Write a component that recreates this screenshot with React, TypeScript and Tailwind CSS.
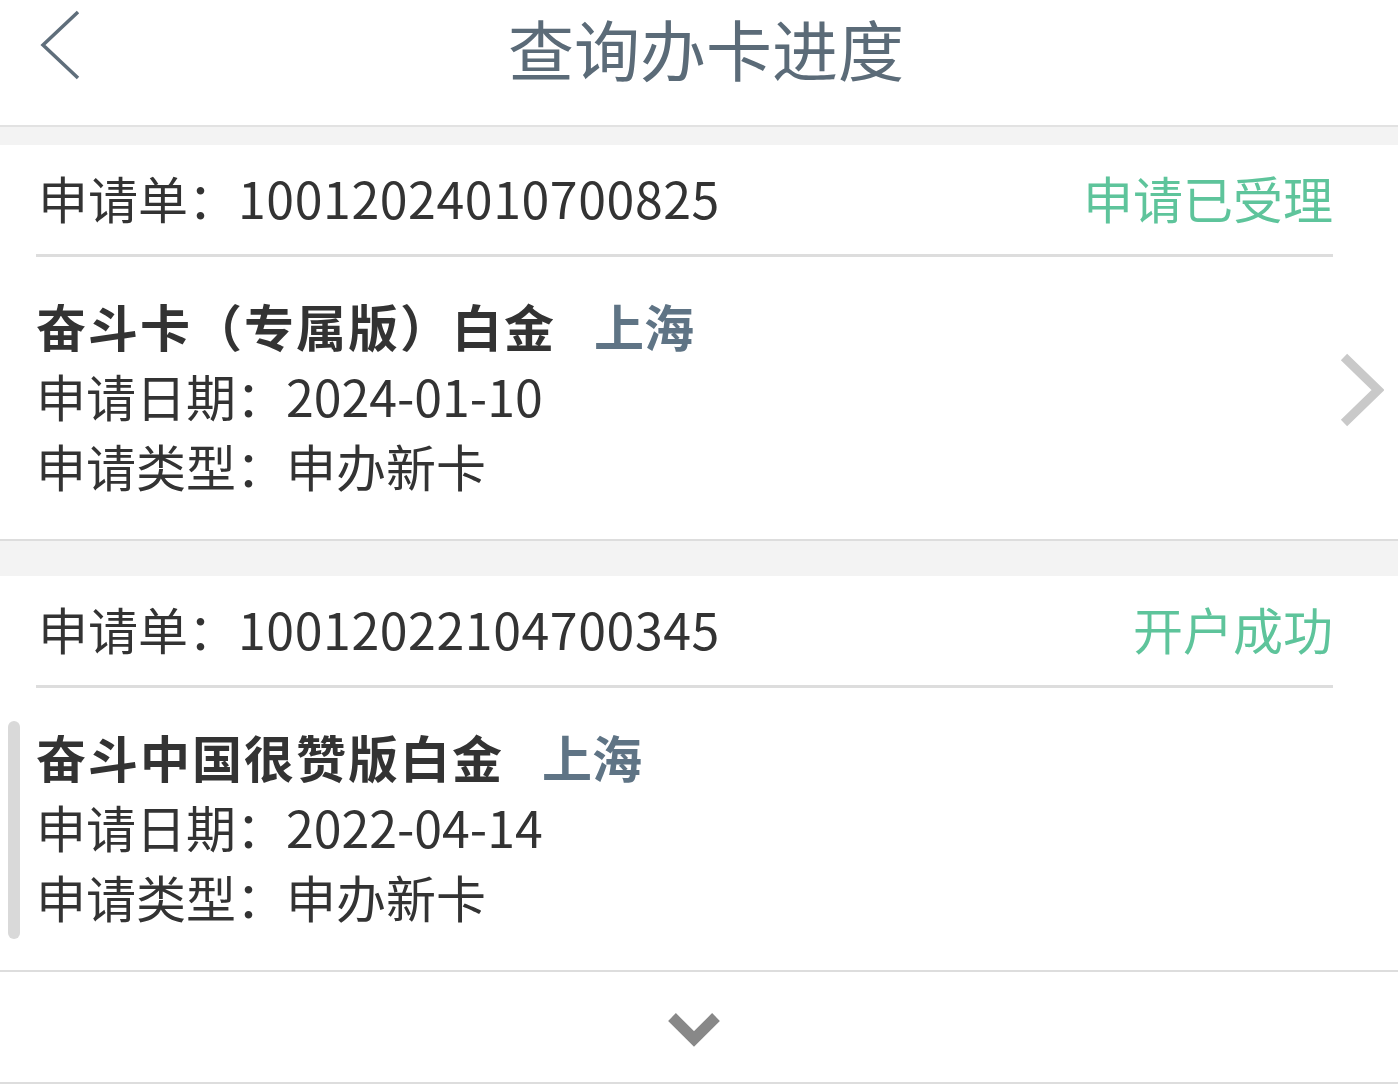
import React from 'react'

const FONT = { fontFamily: '"Noto Sans CJK SC", "Noto Sans", sans-serif' }

type Order = {
  no: string
  status: string
  card: string
  city: string
  date: string
  kind: string
  arrow?: boolean
  scroll?: boolean
}

const orders: Order[] = [
  {
    no: '10012024010700825',
    status: '申请已受理',
    card: '奋斗卡（专属版）白金',
    city: '上海',
    date: '2024-01-10',
    kind: '申办新卡',
    arrow: true,
  },
  {
    no: '10012022104700345',
    status: '开户成功',
    card: '奋斗中国很赞版白金',
    city: '上海',
    date: '2022-04-14',
    kind: '申办新卡',
    scroll: true,
  },
]

const OrderCard = ({ o }: { o: Order }) => {
  return (
    <section className="relative bg-white pl-[36px] pr-[65px]">
      {/** header row */}
      <div className="flex h-[109px] items-center justify-between pb-[4px] pl-[2px]">
        <span className="text-[50px] text-[#333333]">
          申请单：<span className="tracking-[0.6px]">{o.no}</span>
        </span>
        <span className="text-[50px] text-[#5ec49b]">{o.status}</span>
      </div>
      <div className="h-[3px] bg-[#dddddd]"></div>

      {/** body */}
      <div className="pb-[39px] pt-[33px] text-[50px] leading-[70px] text-[#333333]">
        <div className="flex items-center">
          <span className="font-bold tracking-[2px]">{o.card}</span>
          <span className="ml-[38px] font-bold text-[#5f7485]">{o.city}</span>
        </div>
        <div>申请日期：{o.date}</div>
        <div>申请类型：{o.kind}</div>
      </div>

      {o.arrow && (
        <svg
          className="absolute right-[14px] top-[208px]"
          width="44"
          height="74"
          viewBox="0 0 44 74"
          fill="none"
        >
          <path d="M4 4 L38 37 L4 70" stroke="#c9c9c9" strokeWidth="9" />
        </svg>
      )}
      {o.scroll && (
        <div className="absolute left-[8px] top-[145px] h-[218px] w-[12px] rounded-full bg-[#d9d9d9]"></div>
      )}
    </section>
  )
}

const App = () => {
  return (
    <div className="min-h-screen bg-white" style={FONT}>
      {/** top bar */}
      <header className="relative flex h-[127px] items-center justify-center border-b-2 border-[#e2e2e2] bg-white">
        <svg
          className="absolute left-[38px] top-[10px]"
          width="44"
          height="70"
          viewBox="0 0 44 70"
          fill="none"
        >
          <path d="M40 2 L5 35 L40 68" stroke="#5f6e7b" strokeWidth="3.5" />
        </svg>
        <h1 className="-mt-[30px] ml-[14px] text-[66px] text-[#5b6b78]">查询办卡进度</h1>
      </header>

      <div className="h-[18px] bg-[#f3f3f3]"></div>

      <OrderCard o={orders[0]} />

      <div className="h-[37px] border-t-2 border-[#dddddd] bg-[#f3f3f3]"></div>

      <OrderCard o={orders[1]} />

      {/** load more */}
      <footer className="flex h-[114px] items-center justify-center border-y-2 border-[#dddddd] bg-white">
        <svg width="54" height="40" viewBox="0 0 54 40" fill="none" className="ml-[-10px] mt-[6px]">
          <path d="M5 7 L27 29 L49 7" stroke="#888888" strokeWidth="11" />
        </svg>
      </footer>
    </div>
  )
}

export default App
